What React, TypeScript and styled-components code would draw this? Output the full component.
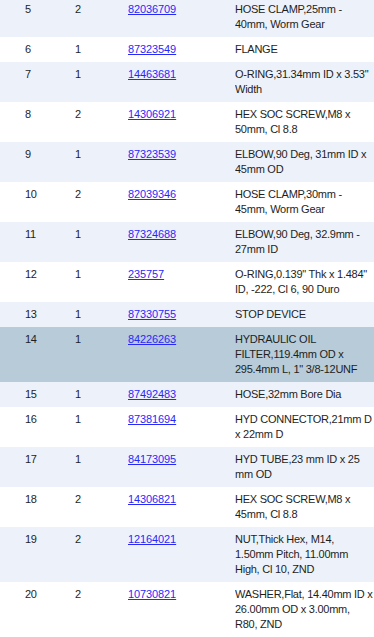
import styled, { createGlobalStyle } from 'styled-components'

const GlobalStyle = createGlobalStyle`
  html, body {
    margin: 0;
    padding: 0;
    background: #ffffff;
    overflow: hidden;
  }
`;

const Page = styled.div`
  width: 374px;
  height: 637px;
  overflow: hidden;
  font-family: 'Liberation Sans', Arial, sans-serif;
  font-size: 11px;
  letter-spacing: -0.25px;
  color: #1e1e1e;
`;

const List = styled.div`
  display: flex;
  flex-direction: column;
  margin-top: -3px;
`;

const Row = styled.div<{ $alt: boolean; $selected: boolean }>`
  display: grid;
  grid-template-columns: 75px 53px 107px 1fr;
  padding: 5px 0;
  line-height: 15px;
  background: ${(p) => (p.$selected ? '#b7cbd8' : p.$alt ? '#edf2fa' : '#ffffff')};
`;

const RefCell = styled.div`
  padding-left: 25px;
`;

const QtyCell = styled.div``;

const PartCell = styled.div``;

const DescCell = styled.div`
  white-space: nowrap;
  overflow: hidden;
`;

const PartLink = styled.a`
  color: #2929f5;
  text-decoration: underline;
  letter-spacing: -0.1px;
`;

const parts: [number, number, string, string[]][] = [
  [5, 2, '82036709', ['HOSE CLAMP,25mm -', '40mm, Worm Gear']],
  [6, 1, '87323549', ['FLANGE']],
  [7, 1, '14463681', ['O-RING,31.34mm ID x 3.53"', 'Width']],
  [8, 2, '14306921', ['HEX SOC SCREW,M8 x', '50mm, Cl 8.8']],
  [9, 1, '87323539', ['ELBOW,90 Deg, 31mm ID x', '45mm OD']],
  [10, 2, '82039346', ['HOSE CLAMP,30mm -', '45mm, Worm Gear']],
  [11, 1, '87324688', ['ELBOW,90 Deg, 32.9mm -', '27mm ID']],
  [12, 1, '235757', ['O-RING,0.139" Thk x 1.484"', 'ID, -222, Cl 6, 90 Duro']],
  [13, 1, '87330755', ['STOP DEVICE']],
  [14, 1, '84226263', ['HYDRAULIC OIL', 'FILTER,119.4mm OD x', '295.4mm L, 1" 3/8-12UNF']],
  [15, 1, '87492483', ['HOSE,32mm Bore Dia']],
  [16, 1, '87381694', ['HYD CONNECTOR,21mm D', 'x 22mm D']],
  [17, 1, '84173095', ['HYD TUBE,23 mm ID x 25', 'mm OD']],
  [18, 2, '14306821', ['HEX SOC SCREW,M8 x', '45mm, Cl 8.8']],
  [19, 2, '12164021', ['NUT,Thick Hex, M14,', '1.50mm Pitch, 11.00mm', 'High, Cl 10, ZND']],
  [20, 2, '10730821', ['WASHER,Flat, 14.40mm ID x', '26.00mm OD x 3.00mm,', 'R80, ZND']],
]

export default function App() {
  return (
    <Page>
      <GlobalStyle />
      <List>
        {parts.map(([ref, qty, num, lines]) => (
          <Row key={ref} $alt={ref % 2 === 1} $selected={ref === 14}>
            <RefCell>{ref}</RefCell>
            <QtyCell>{qty}</QtyCell>
            <PartCell>
              <PartLink href="#">{num}</PartLink>
            </PartCell>
            <DescCell>
              {lines.map((line, i) => (
                <div key={i}>{line}</div>
              ))}
            </DescCell>
          </Row>
        ))}
      </List>
    </Page>
  )
}
